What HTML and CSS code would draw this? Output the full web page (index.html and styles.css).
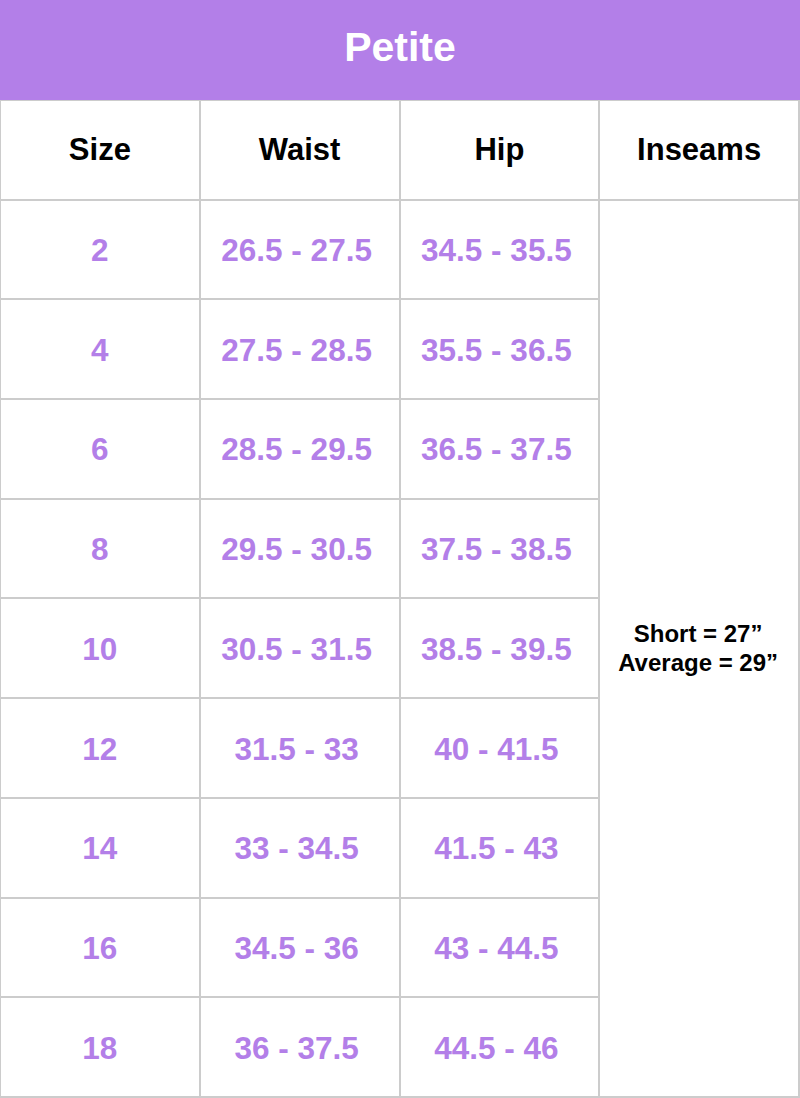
FILE: index.html
```html
<!DOCTYPE html>
<html>
<head>
<meta charset="utf-8">
<link rel="stylesheet" href="styles.css">
</head>
<body>
<div class="title">Petite</div>
<div class="chart">
  <div class="cell head">Size</div>
  <div class="cell head">Waist</div>
  <div class="cell head">Hip</div>
  <div class="cell head">Inseams</div>

  <div class="cell val size">2</div><div class="cell val">26.5 - 27.5</div><div class="cell val">34.5 - 35.5</div>
  <div class="cell inseam">Short = 27”<br>Average = 29”</div>
  <div class="cell val size">4</div><div class="cell val">27.5 - 28.5</div><div class="cell val">35.5 - 36.5</div>
  <div class="cell val size">6</div><div class="cell val">28.5 - 29.5</div><div class="cell val">36.5 - 37.5</div>
  <div class="cell val size">8</div><div class="cell val">29.5 - 30.5</div><div class="cell val">37.5 - 38.5</div>
  <div class="cell val size">10</div><div class="cell val">30.5 - 31.5</div><div class="cell val">38.5 - 39.5</div>
  <div class="cell val size">12</div><div class="cell val">31.5 - 33</div><div class="cell val">40 - 41.5</div>
  <div class="cell val size">14</div><div class="cell val">33 - 34.5</div><div class="cell val">41.5 - 43</div>
  <div class="cell val size">16</div><div class="cell val">34.5 - 36</div><div class="cell val">43 - 44.5</div>
  <div class="cell val size">18</div><div class="cell val">36 - 37.5</div><div class="cell val">44.5 - 46</div>
</div>
</body>
</html>
```
FILE: styles.css
```css
html, body {
  margin: 0;
  padding: 0;
  background: #ffffff;
}
body {
  width: 800px;
  font-family: "Liberation Sans", Arial, sans-serif;
  font-weight: bold;
}
.title {
  height: 100px;
  background: #b37fe8;
  color: #ffffff;
  font-size: 41px;
  display: flex;
  align-items: center;
  justify-content: center;
  padding-bottom: 6px;
  box-sizing: border-box;
}
.chart {
  display: grid;
  grid-template-columns: repeat(4, 1fr);
  grid-template-rows: repeat(10, 1fr);
  gap: 2px;
  padding: 1px 2px 2px 1px;
  height: 998px;
  box-sizing: border-box;
  background: #cccccc;
}
.cell {
  background: #ffffff;
  display: flex;
  align-items: center;
  justify-content: center;
  text-align: center;
}
.head {
  color: #000000;
  font-size: 31px;
}
.val {
  color: #b37fe8;
  font-size: 31.5px;
  padding: 2px 6px 0 0;
}
.val.size {
  padding-right: 0;
}
.inseam {
  grid-column: 4;
  grid-row: 2 / span 9;
  color: #000000;
  font-size: 24px;
  line-height: 29px;
  padding-right: 2px;
}
```
